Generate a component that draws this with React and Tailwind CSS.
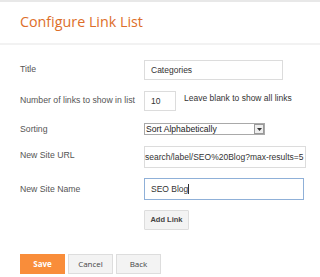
import React from 'react';

const label = "text-[8.7px] leading-none text-[#555] w-[124px] shrink-0 whitespace-nowrap";
const field = "text-[8.5px] leading-none text-[#333]";

export default function App() {
  return (
    <div className="w-[320px] h-[277px] overflow-hidden bg-white border-t-2 border-[#e8e8e8] font-['Liberation_Sans',Arial,sans-serif]">
      <div className="h-[43px] flex items-center px-[20px] border-b-2 border-[#f2f2f2]">
        <h1 className="text-[14.3px] text-[#dd6e2a] font-['Open_Sans',sans-serif] leading-none">Configure Link List</h1>
      </div>

      <div className="pl-[20px] pt-[15px]">
        {/* Title */}
        <div className="flex items-start h-[20px]">
          <div className={`${label} pt-[5px]`}>Title</div>
          <div className={`${field} w-[139px] h-[20px] border border-[#dcdcdc] flex items-center px-[6px]`}>Categories</div>
        </div>

        {/* Number of links */}
        <div className="flex items-start h-[20px] mt-[11px]">
          <div className={`${label} pt-[5px]`}>Number of links to show in list</div>
          <div className={`${field} w-[32px] h-[20px] border border-[#dcdcdc] flex items-center px-[6px]`}>10</div>
          <div className={`${field} ml-[8px] pt-[3px] whitespace-nowrap`}>Leave blank to show all links</div>
        </div>

        {/* Sorting */}
        <div className="flex items-start h-[12px] mt-[12px]">
          <div className={`${label} pt-[2px]`}>Sorting</div>
          <div className="w-[121px] h-[12px] border border-[#a9a9a9] flex items-center justify-between text-[8.6px] text-[#222] leading-none">
            <span className="pl-[1px]">Sort Alphabetically</span>
            <span className="w-[10px] h-[10px] border border-[#999] bg-[#eee] flex items-center justify-center">
              <svg width="5" height="3" viewBox="0 0 5 3"><path d="M0 0h5L2.5 3z" fill="#333" /></svg>
            </span>
          </div>
        </div>

        {/* URL */}
        <div className="flex items-start h-[22px] mt-[11px]">
          <div className={`${label} pt-[5px]`}>New Site URL</div>
          <div className={`${field} w-[162px] h-[22px] border border-[#dcdcdc] flex items-center overflow-hidden whitespace-nowrap`}>search/label/SEO%20Blog?max-results=5</div>
        </div>

        {/* Name */}
        <div className="flex items-start h-[22px] mt-[10px]">
          <div className={`${label} pt-[7px]`}>New Site Name</div>
          <div className={`${field} w-[160px] h-[22px] border border-[#8fb0d8] flex items-center px-[6px]`}>
            SEO Blog<span className="w-px h-[10px] bg-[#333]"></span>
          </div>
        </div>

        <div className="pl-[124px] mt-[5px] h-[20px]">
          <button className="w-[45px] h-[20px] bg-[#f3f3f3] border border-[#ddd] text-[7.5px] font-bold text-[#444] rounded-[1px] leading-none">Add Link</button>
        </div>

        <div className="flex gap-[3px] mt-[29px]">
          <button className="w-[45px] h-[20px] bg-[#f98d3a] text-white text-[8px] font-bold font-['Open_Sans',sans-serif] leading-none">Save</button>
          <button className="w-[45px] h-[20px] bg-[#f3f3f3] border border-[#ddd] text-[#444] text-[8px] font-['Open_Sans',sans-serif] leading-none">Cancel</button>
          <button className="w-[45px] h-[20px] bg-[#f3f3f3] border border-[#ddd] text-[#444] text-[8px] font-['Open_Sans',sans-serif] leading-none">Back</button>
        </div>
      </div>
    </div>
  );
}
